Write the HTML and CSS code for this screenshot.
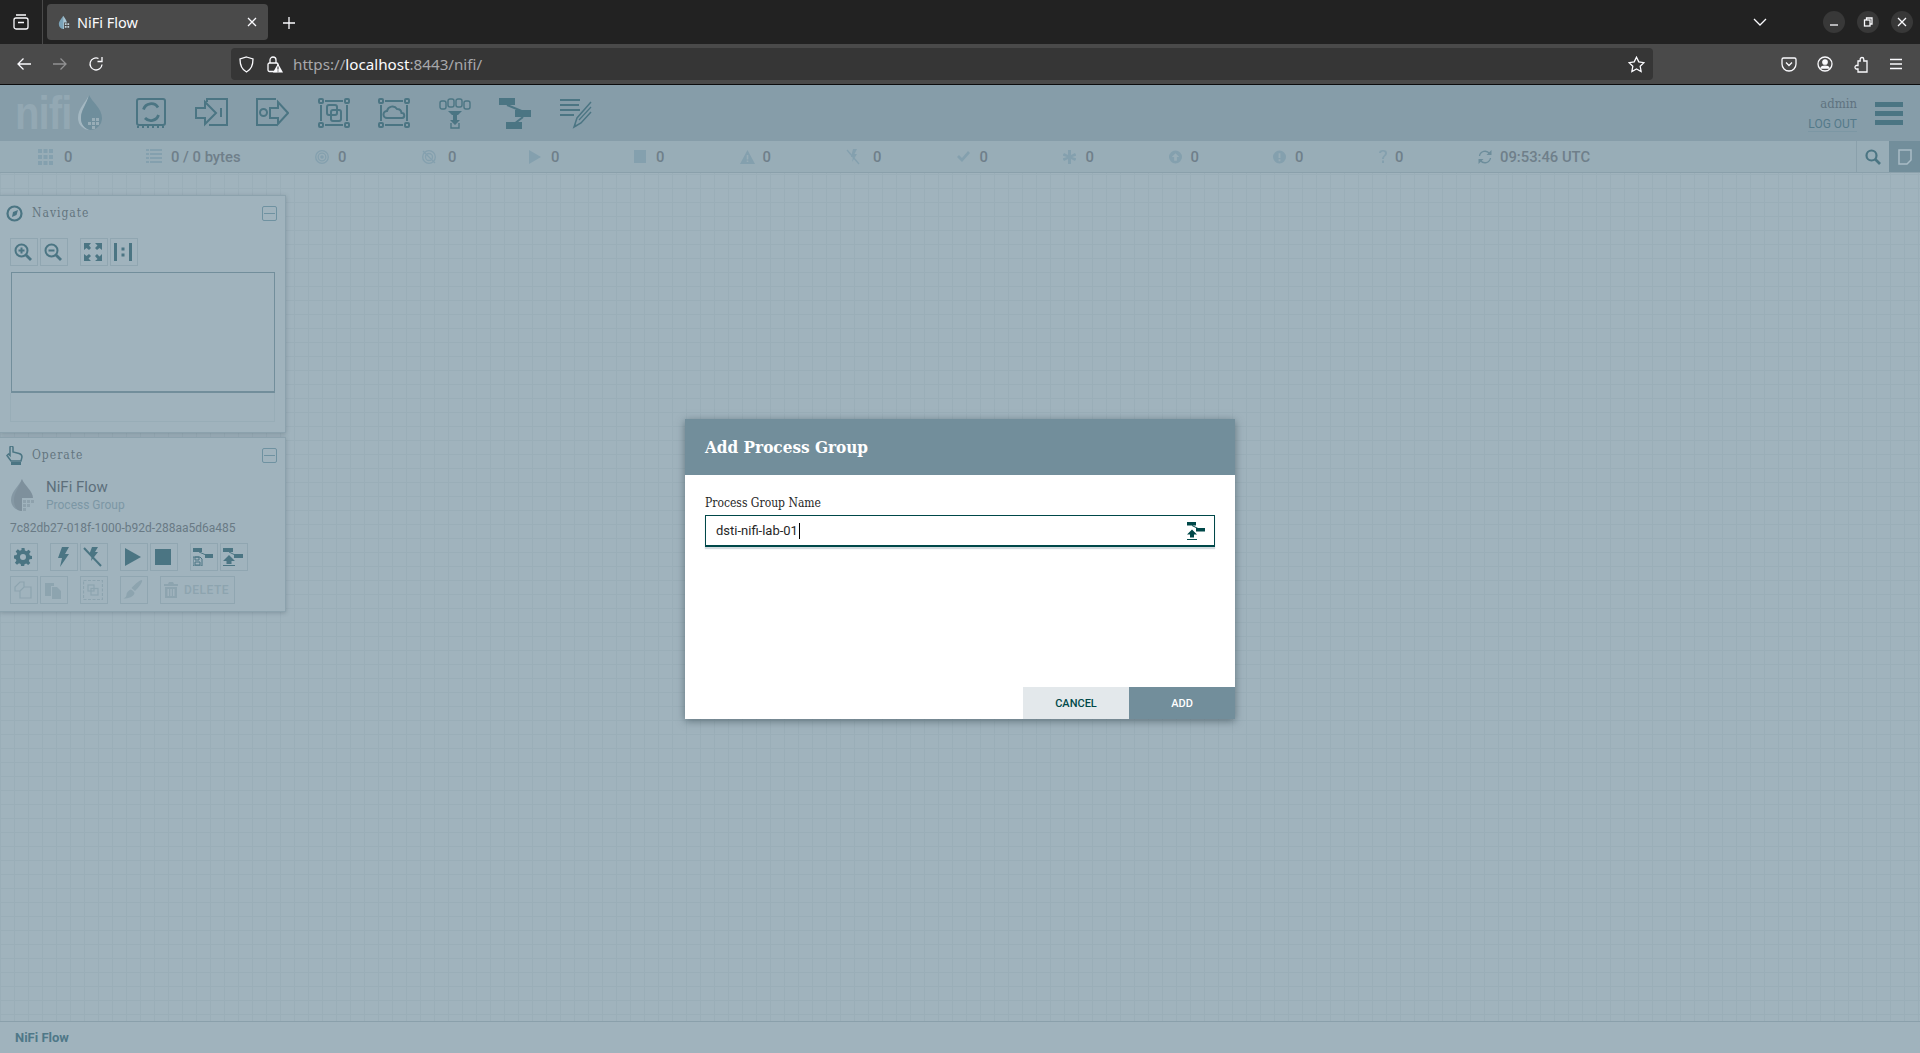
FILE: index.html
```html
<!doctype html>
<html lang="en">
  <head>
    <meta charset="UTF-8" />
    <meta name="viewport" content="width=device-width, initial-scale=1.0" />
    <title>NiFi Flow</title>
    <link rel="stylesheet" href="styles.css">
  </head>
  <body>
    <!-- Browser chrome -->
    <div class="tabbar">
      <div class="sidebar-btn">
        <svg width="18" height="18" viewBox="0 0 18 18" class="line-icon"><rect x="2" y="5" width="14" height="11" rx="2"/><path d="M4 2h10M6 9.5h6"/></svg>
      </div>
      <div class="tab">
        <svg width="12" height="15" viewBox="0 0 14 16"><path d="M6 0C4 4 1 6 1 10a5.5 5.5 0 0 0 6 5.5z" fill="#7ba3b8"/><path d="M6 0c2 3 4 5.5 4.5 8H7v7.5h-1z" fill="#a9c6d4"/><path d="M8 9h2v2H8zM11 9h2v2h-2zM8 12h2v2H8zM11 12h2v2h-2z" fill="#c2d3db"/></svg>
        <span class="tab-title">NiFi Flow</span>
        <svg class="tab-close line-icon" width="10" height="10" viewBox="0 0 10 10"><path d="M1 1l8 8M9 1l-8 8"/></svg>
      </div>
      <svg class="tab-new line-icon" width="14" height="14" viewBox="0 0 14 14"><path d="M7 1v12M1 7h12"/></svg>
      <div class="tabbar-right">
        <svg class="tab-list line-icon" width="14" height="8" viewBox="0 0 14 8"><path d="M1 1l6 6 6-6"/></svg>
        <div class="win-btn"><svg class="line-icon" width="10" height="10" viewBox="0 0 10 10"><path d="M1 8h8"/></svg></div>
        <div class="win-btn"><svg class="line-icon" width="10" height="10" viewBox="0 0 10 10"><rect x="1.5" y="3" width="5.5" height="6"/><path d="M3.5 3V1H9v6H7"/></svg></div>
        <div class="win-btn"><svg class="line-icon" width="10" height="10" viewBox="0 0 10 10"><path d="M1 1l8 8M9 1l-8 8"/></svg></div>
      </div>
    </div>
    <div class="toolbar">
      <svg class="line-icon nav-icon" width="16" height="14" viewBox="0 0 16 14"><path d="M15 7H2M7.5 1.5L2 7l5.500 5.500"/></svg>
      <svg class="line-icon nav-icon nav-off" width="16" height="14" viewBox="0 0 16 14"><path d="M1 7h13M8.500 1.500L14 7l-5.500 5.500"/></svg>
      <svg class="line-icon nav-icon" width="16" height="16" viewBox="0 0 16 16"><path d="M14 8.500A6 6 0 1 1 10.500 2.500"/><path d="M14 1v4.500H9.500" /></svg>
      <div class="urlbar">
        <svg class="line-icon" width="15" height="17" viewBox="0 0 15 17"><path d="M7.500 1L14 3c0 6-1.500 10.500-6.500 13C2.500 13.500 1 9 1 3z"/></svg>
        <svg class="lock-icon" width="16" height="18" viewBox="0 0 16 18"><rect x="1" y="8" width="10" height="8.500" rx="1.500" fill="none" stroke="#fbfbfe" stroke-width="1.300"/><path d="M3 8V5a3 3 0 0 1 6 0v3" fill="none" stroke="#fbfbfe" stroke-width="1.300"/><path d="M11 8.500l5 9H6z" fill="#fbfbfe"/><path d="M11 11.500v3M11 15.500v1" stroke="#333" stroke-width="1.100"/></svg>
        <span class="url"><span class="url-dim">https://</span>localhost<span class="url-dim">:8443/nifi/</span></span>
        <svg class="line-icon url-star" width="17" height="17" viewBox="0 0 17 17"><path d="M8.500 1.200l2.300 4.700 5.100.8-3.700 3.600.9 5.200-4.600-2.500-4.600 2.500.9-5.200L1.100 6.700l5.100-.8z"/></svg>
      </div>
      <div class="toolbar-right">
        <svg class="line-icon" width="16" height="16" viewBox="0 0 16 16"><path d="M2.500 2h11A1.500 1.500 0 0 1 15 3.500V8A7 7 0 0 1 1 8V3.500A1.500 1.500 0 0 1 2.500 2z"/><path d="M5 6.500l3 3 3-3"/></svg>
        <svg class="line-icon" width="16" height="16" viewBox="0 0 16 16"><circle cx="8" cy="8" r="7"/><circle cx="8" cy="6" r="2.200" fill="#fbfbfe"/><path d="M4 12c1-2.500 7-2.500 8 0z" fill="#fbfbfe"/></svg>
        <svg class="line-icon" width="16" height="17" viewBox="0 0 16 17"><path d="M9 1.500a1.800 1.800 0 0 1 1.800 1.800V5H14v11H5v-3H3a2 2 0 0 1 0-3.500h2V5h2.200V3.300A1.800 1.800 0 0 1 9 1.500z"/></svg>
        <svg class="line-icon" width="14" height="12" viewBox="0 0 14 12"><path d="M1 1.500h12M1 6h12M1 10.500h12"/></svg>
      </div>
    </div>

    <!-- NiFi page -->
    <div class="page">
      <header class="flow-header">
        <div class="logo">
          <span class="logo-text">nifi</span>
          <svg width="26" height="36" viewBox="0 0 26 36"><path d="M12 0C9 7 1 13 1 23a12 12 0 0 0 12 12c-6-2-9-6-9-12C4 15 10 9 12 0z" fill="#a3b7c1"/><path d="M12 0c3 7 13 13 13 23a12 12 0 0 1-12 12C7 33 4 29 4 23 4 15 10 9 12 0z" fill="#6f8e9c"/><path d="M15 23h3v3h-3zM19 23h3v3h-3zM15 27h3v3h-3zM19 27h3v3h-3zM11 27h3v3h-3zM15 31h3v3h-3z" fill="#98adb7"/></svg>
        </div>
        <div class="components">
          <svg class="comp" width="30" height="30" viewBox="0 0 30 30"><rect x="1" y="1" width="28" height="26" rx="2"/><path d="M1 29h28" stroke-dasharray="2 3"/><path d="M7.500 11.500A8 8 0 0 1 22 9.500M22.500 17A8 8 0 0 1 9 20" stroke-width="2.800"/></svg>
          <svg class="comp" width="33" height="30" viewBox="0 0 33 30"><path d="M12 4V1h20v26H14"/><path d="M1 10h9V4l11 11-11 11v-6H1z"/><path d="M26 10v9" /></svg>
          <svg class="comp" width="33" height="30" viewBox="0 0 33 30"><path d="M20 1H1v26h20"/><circle cx="7.500" cy="14.500" r="3.500"/><path d="M14 10h8V4l10 11-10 11v-6h-8z"/></svg>
          <svg class="comp" width="32" height="30" viewBox="0 0 32 30"><use href="#frame"/><rect x="9" y="7" width="10" height="10" rx="2"/><rect x="13" y="12" width="10" height="11" rx="2"/></svg>
          <svg class="comp" width="32" height="30" viewBox="0 0 32 30"><use href="#frame"/><path d="M9 20a3.500 3.500 0 0 1 0-7 5.500 5.500 0 0 1 10-2 4.500 4.500 0 0 1 4.500 4A2.500 2.500 0 0 1 24 20z"/></svg>
          <svg class="comp comp-thin" width="32" height="31" viewBox="0 0 32 31"><rect x="1" y="3" width="6" height="8" rx="2"/><rect x="9" y="1" width="6" height="8" rx="2"/><rect x="17" y="1" width="6" height="8" rx="2"/><rect x="25" y="3" width="6" height="8" rx="2"/><path d="M9 13h14l-4 4h-6z" class="solid"/><path d="M14 17h4v5h3l-5 5-5-5h3z" class="solid"/><path d="M12 25v5h8v-5"/></svg>
          <svg class="comp" width="32" height="31" viewBox="0 0 32 31"><path d="M8 7l17 7M24 19l-9 7"/><rect x="0" y="0" width="16" height="7" class="solid"/><rect x="16" y="12" width="16" height="7" class="solid"/><rect x="7" y="24" width="16" height="7" class="solid"/></svg>
          <svg class="comp" width="32" height="31" viewBox="0 0 32 31"><path d="M0 2h20M0 7h19M0 12h20M0 17h14" stroke-width="2.200"/><path d="M31 4L17 20l-3 9 7-4L31 14" stroke-width="1.500"/><path d="M31 9L19 22" stroke-width="1.200"/><path d="M14 29l1-3 2 2z" class="solid"/></svg>
        </div>
        <div class="user-box">
          <span class="user-name">admin</span>
          <span class="logout">LOG OUT</span>
        </div>
        <div class="global-menu"><span></span><span></span><span></span></div>
      </header>

      <div class="stats">
        <div class="stat g11"><svg width="15" height="16" viewBox="0 0 15 16"><path d="M0 0h4v4H0zM5.500 0h4v4h-4zM11 0h4v4h-4zM0 6h4v4H0zM5.500 6h4v4h-4zM11 6h4v4h-4zM0 12h4v4H0zM5.500 12h4v4h-4zM11 12h4v4h-4z"/></svg><span>0</span></div>
        <div class="stat g9"><svg width="16" height="15" viewBox="0 0 16 15"><path d="M0 0h3v2H0zM4 0h12v2H4zM0 4h3v2H0zM4 4h12v2H4zM0 8h3v2H0zM4 8h12v2H4zM0 12h3v2H0zM4 12h12v2H4z"/></svg><span>0 / 0 bytes</span></div>
        <div class="stat g9"><svg width="14" height="14" viewBox="0 0 14 14"><circle cx="7" cy="7" r="6.300" class="ring"/><circle cx="7" cy="7" r="3.800" class="ring"/><circle cx="7" cy="7" r="1.800"/></svg><span>0</span></div>
        <div class="stat g12"><svg width="14" height="14" viewBox="0 0 14 14"><circle cx="7" cy="7" r="6.300" class="ring"/><circle cx="7" cy="7" r="3.500" class="ring"/><path d="M1 1l12 12" class="ring"/></svg><span>0</span></div>
        <div class="stat"><svg width="12" height="14" viewBox="0 0 12 14"><path d="M0 0l12 7-12 7z"/></svg><span>0</span></div>
        <div class="stat"><svg width="12" height="13" viewBox="0 0 12 13"><path d="M0 0h12v13H0z"/></svg><span>0</span></div>
        <div class="stat g8"><svg width="15" height="14" viewBox="0 0 15 14"><path fill-rule="evenodd" d="M7.500 0L15 14H0zM6.700 5v4.500h1.600V5zM6.700 10.500V12h1.600v-1.500z"/></svg><span>0</span></div>
        <div class="stat g13"><svg width="14" height="16" viewBox="0 0 14 16"><path d="M7 0h4L8.500 5H11l-5 8 1-5H5z"/><path d="M1 1l12 14" class="ring"/></svg><span>0</span></div>
        <div class="stat"><svg width="13" height="11" viewBox="0 0 13 11"><path d="M0 6l2-2 3 3 6-7 2 2-8 9z"/></svg><span>0</span></div>
        <div class="stat"><svg width="13" height="14" viewBox="0 0 13 14"><path d="M5 0h3v5l4-2 1.500 2.500L9 7l4.500 1.500L12 11 8 9v5H5V9l-4 2-1.500-2.500L4 7-.5 5.500 1 3l4 2z"/></svg><span>0</span></div>
        <div class="stat g9"><svg width="13" height="14" viewBox="0 0 14 14"><path fill-rule="evenodd" d="M7 0a7 7 0 1 0 0 14A7 7 0 0 0 7 0zM7 3l4 4H8.500v4h-3V7H3z"/></svg><span>0</span></div>
        <div class="stat g9"><svg width="13" height="14" viewBox="0 0 14 14"><path fill-rule="evenodd" d="M7 0a7 7 0 1 0 0 14A7 7 0 0 0 7 0zM6 3h2v5H6zM6 9.500h2v2H6z"/></svg><span>0</span></div>
        <div class="stat g8"><svg width="8" height="13" viewBox="0 0 8 13"><path d="M0 3a4 3 0 0 1 8 0c0 3-3 3-3 6H3c0-3 3-3.500 3-6a2 1.500 0 0 0-4 0zM3 10.500h2V13H3z"/></svg><span>0</span></div>
        <div class="stat g8 stat-time"><svg width="14" height="14" viewBox="0 0 14 14"><path d="M1.500 6a5.600 5.600 0 0 1 10-2.500M12.500 8a5.600 5.600 0 0 1-10 2.500" class="ring" stroke-width="2"/><path d="M13.500 0v5h-5zM.5 14V9h5z"/></svg><span>09:53:46 UTC</span></div>
        <div class="stats-actions">
          <div class="search-btn"><svg width="16" height="16" viewBox="0 0 16 16"><circle cx="6.500" cy="6.500" r="5" fill="none" stroke="#4b7583" stroke-width="2.200"/><path d="M10 10l5 5" stroke="#4b7583" stroke-width="2.600"/></svg></div>
          <div class="bulletin-btn"><svg width="14" height="16" viewBox="0 0 14 16"><path d="M1 1h12v10l-4 4H1z" fill="none" stroke="#a9bcc6" stroke-width="1.500"/></svg></div>
        </div>
      </div>

      <main class="canvas">
        <section class="panel panel-nav">
          <div class="panel-head">
            <svg class="panel-icon" width="17" height="17" viewBox="0 0 17 17"><circle cx="8.500" cy="8.500" r="7" fill="none" stroke-width="2.200"/><path d="M12 5l-1.500 5L6 12l1-5z" stroke="none"/></svg>
            <span class="panel-title">Navigate</span>
            <span class="collapse"></span>
          </div>
          <div class="btn-row nav-row">
            <div class="tool"><svg width="18" height="18" viewBox="0 0 18 18"><circle cx="7.500" cy="7.500" r="6" class="ring2"/><path d="M12 12l5 5" class="ring3"/><path d="M7.500 4.500v6M4.500 7.500h6" class="ring2"/></svg></div>
            <div class="tool"><svg width="18" height="18" viewBox="0 0 18 18"><circle cx="7.500" cy="7.500" r="6" class="ring2"/><path d="M12 12l5 5" class="ring3"/><path d="M4.500 7.500h6" class="ring2"/></svg></div>
            <div class="tool group-start"><svg width="18" height="18" viewBox="0 0 18 18"><path d="M0 0h7L5 2.500 7 5 5 7 2.500 5 0 7zM18 0v7l-2.500-2L13 7l-2-2 2.500-2.500L11 0zM0 18v-7l2.500 2L5 11l2 2-2.500 2.500L7 18zM18 18h-7l2.500-2L11 13l2-2 2.500 2.500L18 11z"/></svg></div>
            <div class="tool"><svg width="18" height="18" viewBox="0 0 18 18"><path d="M0 0h3v18H0zM15 0h3v18h-3zM7.500 4.500h3v3h-3zM7.500 10.500h3v3h-3z"/></svg></div>
          </div>
          <div class="birdseye"></div>
          <div class="birdseye-foot"></div>
        </section>

        <section class="panel panel-op">
          <div class="panel-head">
            <svg class="panel-icon" width="17" height="19" viewBox="0 0 17 19"><path d="M4 1.500a1.500 1.500 0 0 1 3 0V6l6 1.500c2 .5 3 1.500 3 3.500l-1 4H5L1 9.500 2.500 8 4 9.500z" fill="none" stroke-width="1.500"/><path d="M5 16h10v3H5z" stroke="none"/></svg>
            <span class="panel-title">Operate</span>
            <span class="collapse"></span>
          </div>
          <div class="selection">
            <svg width="24" height="32" viewBox="0 0 24 32"><path d="M11 0C9 6 0 12 0 21a11 11 0 0 0 11 11z" fill="#8598a4"/><path d="M11 0c2 6 11 12 11 19H11v13C5 32 3 26 3 21 3 13 9 7 11 0z" fill="#7e909c"/><path d="M12 21h3v3h-3zM16 21h3v3h-3zM20 21h3v3h-3zM12 25h3v3h-3zM16 25h3v3h-3zM12 29h3v3h-3z" fill="#8ea1ac"/></svg>
            <div class="selection-text">
              <span class="selection-name">NiFi Flow</span>
              <span class="selection-type">Process Group</span>
            </div>
          </div>
          <div class="selection-id">7c82db27-018f-1000-b92d-288aa5d6a485</div>
          <div class="btn-row">
            <div class="tool"><svg width="18" height="18" viewBox="0 0 18 18"><path fill-rule="evenodd" d="M7.500 0h3l.4 2.500 1.700.7 2-1.500 2.100 2.100-1.500 2 .7 1.700L18 7.900v3l-2.500.4-.7 1.700 1.500 2-2.100 2.100-2-1.500-1.700.7-.4 2.200h-3l-.4-2.500-1.700-.7-2 1.500-2.100-2.100 1.500-2-.7-1.700L0 10.500v-3l2.500-.4.700-1.700-1.500-2 2.100-2.100 2 1.500 1.700-.7zM9 6a3 3 0 1 0 0 6 3 3 0 0 0 0-6z"/></svg></div>
            <div class="tool group-start"><svg width="18" height="20" viewBox="0 0 18 20"><path d="M8 0h7l-4 7h4L6 20l2-9H4z"/></svg></div>
            <div class="tool"><svg width="20" height="20" viewBox="0 0 20 20"><path d="M9 0h6l-3 5h3l-7 9 1-6H6z"/><path d="M1 1l17 18" class="ring2"/></svg></div>
            <div class="tool group-start"><svg width="16" height="18" viewBox="0 0 16 18"><path d="M0 0l16 9-16 9z"/></svg></div>
            <div class="tool"><svg width="16" height="16" viewBox="0 0 16 16"><path d="M0 0h16v16H0z"/></svg></div>
            <div class="tool group-start"><svg width="20" height="18" viewBox="0 0 20 18"><path d="M0 0h9v4H0zM12 6h8v4h-8z"/><path d="M6 4l7 3" class="ring"/><path d="M0 9h7l2 2v7H0z" class="ring"/><path d="M2 9h4v3H2zM2 14h5v3H2z" class="ring"/></svg></div>
            <div class="tool"><svg width="20" height="18" viewBox="0 0 20 18"><path d="M0 0h10v4H0zM11 6h9v4h-9z"/><path d="M6 4l6 3" class="ring"/><path d="M6 7l-6 6h3.500v3h5v-3H12zM0 17h12v1H0z"/></svg></div>
          </div>
          <div class="btn-row dim-row">
            <div class="tool"><svg width="18" height="18" viewBox="0 0 18 18" class="thin"><path d="M6 10H1V6l5-5h4v5M6 10l4-4h7v11H6z"/></svg></div>
            <div class="tool"><svg width="18" height="18" viewBox="0 0 18 18"><path d="M1 2h9v3H7v10H1z"/><path d="M8 6h5l4 4v8H8z"/></svg></div>
            <div class="tool group-start"><svg width="20" height="20" viewBox="0 0 20 20" class="thin"><rect x="0.500" y="0.500" width="19" height="19" stroke-dasharray="3 1.500"/><rect x="5" y="5" width="6" height="6"/><rect x="8" y="8.500" width="7" height="6.500"/></svg></div>
            <div class="tool group-start"><svg width="20" height="20" viewBox="0 0 20 20"><path d="M19 0c1 2-3 7-7 11L8.500 8C13 3 17 0 19 0zM7.500 9.500c2 .5 3.500 2 4 3.500-1 4-6 5.500-11 5.500 2-1 3-2 3-4 0-2 2-4 4-5z"/></svg></div>
            <div class="tool tool-wide">
              <svg width="14" height="16" viewBox="0 0 14 16"><path fill-rule="evenodd" d="M5 0h4l1 2h4v2H0V2h4zM1 5h12v11H1zM3.500 7v7h1.500V7zM6.300 7v7h1.500V7zM9 7v7h1.500V7z"/></svg>
              <span>DELETE</span>
            </div>
          </div>
        </section>

        <div class="dialog">
          <div class="dialog-head">Add Process Group</div>
          <div class="dialog-body">
            <div class="field-label">Process Group Name</div>
            <div class="name-input">
              <span>dsti-nifi-lab-01</span><span class="caret"></span>
              <svg class="name-icon" width="18" height="18" viewBox="0 0 18 18"><path d="M0 0h9v3.500H0zM9 6h9v3.500H9z"/><path d="M5 3.500l6 3" stroke="#004849" stroke-width="1"/><path d="M5 7.500l-5 5h3v3h4v-3h3zM0 17h10v1H0z"/></svg>
            </div>
          </div>
          <div class="dialog-foot">
            <div class="btn btn-cancel">CANCEL</div>
            <div class="btn btn-add">ADD</div>
          </div>
        </div>
      </main>

      <footer class="breadcrumb">NiFi Flow</footer>
    </div>

    <!-- shared frame for the group icons -->
    <svg width="0" height="0" class="defs">
      <defs>
        <g id="frame">
          <rect x="1" y="1" width="4" height="4" rx="1"/><rect x="27" y="1" width="4" height="4" rx="1"/>
          <rect x="1" y="25" width="4" height="4" rx="1"/><rect x="27" y="25" width="4" height="4" rx="1"/>
          <path d="M7 3h18M7 27h18M3 7v16M29 7v16"/>
        </g>
      </defs>
    </svg>
  </body>
</html>
```

FILE: styles.css
```css
html, body {
  margin: 0;
  height: 100%;
}
body {
  display: flex;
  flex-direction: column;
  overflow: hidden;
  font-family: Roboto, sans-serif;
}
.defs {
  position: absolute;
}
.line-icon {
  fill: none;
  stroke: #fbfbfe;
  stroke-width: 1.3;
}

/* browser chrome */
.tabbar {
  height: 44px;
  flex: none;
  background: #222222;
  display: flex;
  align-items: center;
}
.sidebar-btn {
  width: 42px;
  height: 44px;
  border-right: 1px solid #4a4a4a;
  display: flex;
  align-items: center;
  justify-content: center;
  margin-right: 4px;
}
.tab {
  width: 221px;
  height: 36px;
  background: #4a4a4a;
  border-radius: 4px;
  display: flex;
  align-items: center;
  padding: 0 11px 0 11px;
  box-sizing: border-box;
  gap: 7px;
}
.tab-title {
  font-family: "Noto Sans", sans-serif;
  font-size: 14.5px;
  color: #fbfbfe;
  flex: 1;
}
.tab-new {
  margin: 1px 0 0 14px;
}
.tabbar-right {
  margin-left: auto;
  display: flex;
  align-items: center;
}
.tab-list {
  margin-right: 56px;
}
.win-btn {
  width: 22px;
  height: 22px;
  border-radius: 50%;
  background: #383838;
  display: flex;
  align-items: center;
  justify-content: center;
  margin-right: 12px;
}
.win-btn:last-child {
  margin-right: 7px;
}
.toolbar {
  height: 41px;
  flex: none;
  box-sizing: border-box;
  background: #4a4a4a;
  border-bottom: 1px solid #0c0c0d;
  display: flex;
  align-items: center;
  padding-left: 16px;
}
.nav-icon {
  margin-right: 20px;
}
.nav-off {
  opacity: 0.4;
}
.urlbar {
  margin-left: 107px;
  width: 1422px;
  flex: none;
  height: 32px;
  background: #363636;
  border-radius: 4px;
  display: flex;
  align-items: center;
  padding: 0 8px;
  box-sizing: border-box;
}
.lock-icon {
  margin-left: 13px;
}
.url {
  margin-left: 10px;
  font-family: "Noto Sans", sans-serif;
  font-size: 15.2px;
  color: #fbfbfe;
}
.url-dim {
  color: #a8a8ab;
}
.url-star {
  margin-left: auto;
}
.toolbar-right {
  margin-left: auto;
  display: flex;
  align-items: center;
  gap: 20px;
  padding-right: 17px;
}

/* flow page */
.page {
  flex: 1;
  display: flex;
  flex-direction: column;
  min-height: 0;
}
.flow-header {
  height: 56px;
  background: #869da9;
  display: flex;
  align-items: center;
  flex: none;
}
.logo {
  width: 136px;
  padding-left: 15px;
  box-sizing: border-box;
  display: flex;
  align-items: center;
  gap: 4px;
  flex: none;
}
.logo-text {
  display: inline-block;
  width: 58px;
  font-family: "Liberation Sans", sans-serif;
  font-weight: bold;
  font-size: 46px;
  letter-spacing: -1px;
  line-height: 36px;
  color: #93a8b3;
  transform: scaleX(0.87);
  transform-origin: left center;
}
.components {
  display: flex;
  align-items: center;
  gap: 28.5px;
  flex: 1;
}
.comp {
  fill: none;
  stroke: #4b7583;
  stroke-width: 2;
}
.comp-thin {
  stroke-width: 1.4;
}
.comp .solid {
  fill: #4b7583;
  stroke: none;
}
.user-box {
  display: flex;
  flex-direction: column;
  align-items: flex-end;
  gap: 6px;
  margin: 2px 18px 0 0;
}
.user-name {
  font-family: "DejaVu Serif Condensed", "DejaVu Serif", serif;
  font-size: 13px;
  color: #5f7380;
}
.logout {
  font-size: 12px;
  color: #547a8a;
  border-bottom: 1px solid #7c97a4;
}
.global-menu {
  width: 28px;
  display: flex;
  flex-direction: column;
  gap: 4px;
  margin-right: 17px;
}
.global-menu span {
  height: 5px;
  background: #4b7583;
}
.stats {
  height: 32px;
  flex: none;
  background: #98adb7;
  border-bottom: 1px solid #8aa0ab;
  box-sizing: border-box;
  display: grid;
  grid-template-columns: 108px 169px 107px 107px 105px 105.5px 106.5px 110.5px 106px 106px 104.5px 106px 99px 1fr auto;
  align-items: center;
  padding-left: 38px;
  font-size: 14.8px;
  font-weight: 500;
  color: #6f7f8a;
}
.stat {
  display: flex;
  align-items: center;
  gap: 10px;
}
.g8 { gap: 8px; }
.g9 { gap: 9px; }
.g11 { gap: 11px; }
.g12 { gap: 12px; }
.g13 { gap: 13px; }
.stat svg {
  fill: #84a0ae;
  flex: none;
}
.stat .ring {
  fill: none;
  stroke: #84a0ae;
  stroke-width: 1.3;
}
.stat-time svg {
  fill: #6d8d9b;
}
.stat-time .ring {
  stroke: #6d8d9b;
}
.stats-actions {
  grid-column: 15;
  display: flex;
  height: 31px;
}
.search-btn {
  width: 32px;
  border-left: 1px solid #8aa0ab;
  display: flex;
  align-items: center;
  justify-content: center;
}
.bulletin-btn {
  width: 31px;
  background: #728e9b;
  display: flex;
  align-items: center;
  justify-content: center;
}
.canvas {
  flex: 1;
  position: relative;
  background-color: #a0b3bd;
  background-image:
    linear-gradient(#9aaeb8 1px, transparent 1px),
    linear-gradient(90deg, #9aaeb8 1px, transparent 1px);
  background-size: 14px 14px;
  background-position: 0 1px;
  padding-top: 22px;
  box-sizing: border-box;
  min-height: 0;
}
.panel {
  width: 286px;
  box-sizing: border-box;
  background: #a0b3bd;
  border: 1px solid #8ca2ad;
  border-left: none;
  box-shadow: 0 1px 4px rgba(60, 80, 90, 0.3);
  padding: 0 10px;
  margin-bottom: 4px;
}
.panel-nav {
  height: 238px;
}
.panel-op {
  height: 175px;
}
.panel-head {
  height: 34px;
  display: flex;
  align-items: center;
  gap: 9px;
  margin: 0 -2px 0 -4px;
}
.panel-icon {
  fill: #4b7583;
  stroke: #4b7583;
  flex: none;
  width: 17px;
}
.panel-title {
  font-family: "DejaVu Serif Condensed", "DejaVu Serif", serif;
  font-size: 12px;
  letter-spacing: 1px;
  color: #63757f;
  flex: 1;
}
.collapse {
  width: 13px;
  height: 13px;
  border: 1px solid #6f92a1;
  border-radius: 2px;
  position: relative;
}
.collapse::before {
  content: "";
  position: absolute;
  left: 1px;
  right: 1px;
  top: 6px;
  height: 1px;
  background: #6f92a1;
}
.btn-row {
  display: flex;
  gap: 2px;
  margin-top: 8px;
}
.tool {
  width: 28px;
  height: 28px;
  box-sizing: border-box;
  border: 1px solid #90a6b1;
  padding-right: 2px;
  display: flex;
  align-items: center;
  justify-content: center;
  fill: #4b7583;
}
.group-start {
  margin-left: 10px;
}
.tool .ring {
  fill: none;
  stroke: #4b7583;
  stroke-width: 1;
}
.tool .ring2 {
  fill: none;
  stroke: #4b7583;
  stroke-width: 2;
}
.tool .ring3 {
  fill: none;
  stroke: #4b7583;
  stroke-width: 2.8;
}
.dim-row {
  margin-top: 5px;
}
.dim-row .tool {
  fill: #8da4af;
}
.dim-row .thin {
  fill: none;
  stroke: #8da4af;
  stroke-width: 1.2;
}
.tool-wide {
  width: 75px;
  margin-left: 10px;
  gap: 6px;
  font-size: 12px;
  font-weight: 500;
  letter-spacing: 0.5px;
  color: #8da4af;
}
.birdseye {
  margin: 6px 0 0 1px;
  width: 264px;
  height: 121px;
  box-sizing: border-box;
  border: 1px solid #728e9b;
  border-bottom-width: 2px;
}
.birdseye-foot {
  width: 265px;
  height: 29px;
  box-sizing: border-box;
  border: 1px solid #98adb7;
  border-top: none;
}
.selection {
  display: flex;
  align-items: center;
  gap: 11px;
  margin: 6px 0 0 1px;
}
.selection-text {
  display: flex;
  flex-direction: column;
  gap: 2px;
}
.selection-name {
  font-size: 15px;
  line-height: 18px;
  color: #5d6f7b;
}
.selection-type {
  font-size: 12px;
  line-height: 14px;
  color: #7c97a5;
}
.selection-id {
  font-size: 12px;
  line-height: 14px;
  color: #697a85;
  margin-top: 9px;
}
.dialog {
  position: absolute;
  left: 685px;
  top: 246px;
  width: 550px;
  height: 300px;
  background: #ffffff;
  box-shadow: 0 2px 8px rgba(40, 60, 70, 0.55);
  display: flex;
  flex-direction: column;
}
.dialog-head {
  height: 56px;
  flex: none;
  background: #728e9b;
  color: #ffffff;
  font-family: "DejaVu Serif Condensed", "DejaVu Serif", serif;
  font-weight: bold;
  font-size: 17px;
  display: flex;
  align-items: center;
  padding-left: 20px;
}
.dialog-body {
  flex: 1;
  padding: 20px 20px 0;
}
.field-label {
  font-family: "DejaVu Serif Condensed", "DejaVu Serif", serif;
  font-size: 12px;
  line-height: 16px;
  color: #262626;
  margin-bottom: 4px;
}
.name-input {
  height: 32px;
  box-sizing: border-box;
  border: 1px solid #004849;
  border-bottom-width: 2px;
  box-shadow: 0 2px 1px #d4dbdf;
  display: flex;
  align-items: center;
  padding-left: 10px;
  font-size: 13px;
  color: #262626;
}
.caret {
  width: 1px;
  height: 16px;
  background: #000000;
  margin-left: 1px;
}
.name-icon {
  margin-left: auto;
  margin-right: 9px;
  fill: #004849;
}
.dialog-foot {
  height: 32px;
  flex: none;
  display: flex;
  justify-content: flex-end;
}
.btn {
  width: 106px;
  display: flex;
  align-items: center;
  justify-content: center;
  font-size: 11px;
  font-weight: 500;
}
.btn-cancel {
  background: #e3e8eb;
  color: #004849;
}
.btn-add {
  background: #728e9b;
  color: #ffffff;
}
.breadcrumb {
  height: 31px;
  flex: none;
  background: #a0b3bd;
  border-top: 1px solid #8aa0ab;
  display: flex;
  align-items: center;
  padding-left: 15px;
  font-size: 13px;
  font-weight: 700;
  color: #4f7888;
}
```
